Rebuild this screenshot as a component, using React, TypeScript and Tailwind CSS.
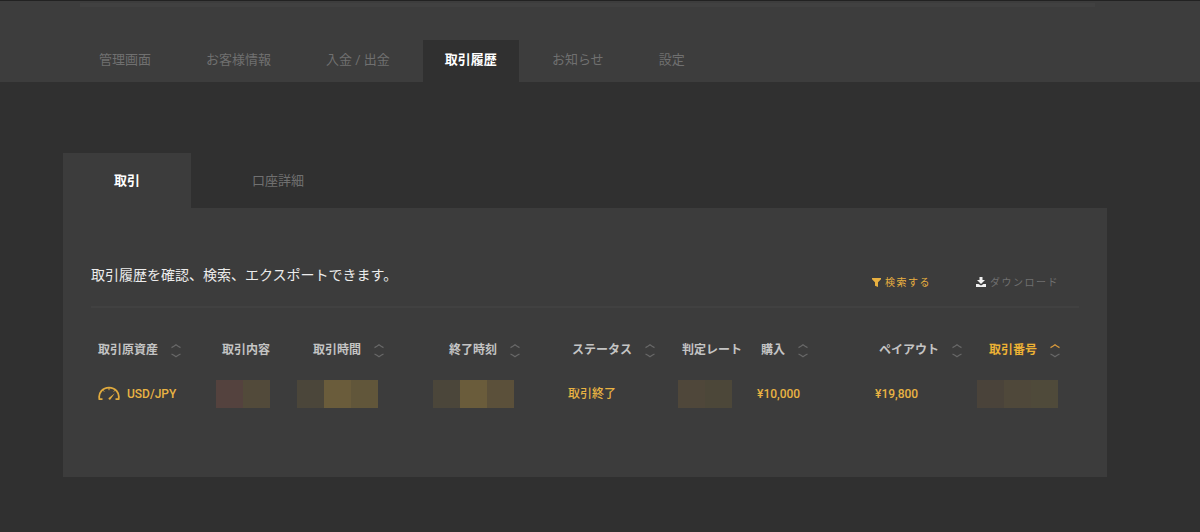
import { useState } from 'react'
import clsx from 'clsx'

const navItems = ['管理画面', 'お客様情報', '入金 / 出金', '取引履歴', 'お知らせ', '設定']

const columns = [
  { label: '取引原資産', sortable: true, width: 'w-[125px]', pad: 'pl-[7px]' },
  { label: '取引内容', sortable: false, width: 'w-[81px]', pad: 'pl-1.5' },
  { label: '取引時間', sortable: true, width: 'w-[136px]', pad: 'pl-4' },
  { label: '終了時刻', sortable: true, width: 'w-[135px]', pad: 'pl-4' },
  { label: 'ステータス', sortable: true, width: 'w-[110px]', pad: 'pl-1' },
  { label: '判定レート', sortable: false, width: 'w-[79px]', pad: 'pl-1' },
  { label: '購入', sortable: true, width: 'w-[118px]', pad: 'pl-1' },
  { label: 'ペイアウト', sortable: true, width: 'w-[102px]', pad: 'pl-1' },
  { label: '取引番号', sortable: true, width: 'w-[102px]', pad: 'pl-3' },
]

function SortIcon({ active }: { active: boolean }) {
  return (
    <svg className="w-3 h-4 shrink-0" viewBox="0 0 12 16" fill="none" strokeWidth="1.2">
      <path d="M1.5 5.6 Q4 4.4 6 2.8 Q8 4.4 10.5 5.6" stroke={active ? '#d99a3c' : '#686868'} />
      <path d="M1.5 12 Q4 13.2 6 14.8 Q8 13.2 10.5 12" stroke="#686868" />
    </svg>
  )
}

function GaugeIcon() {
  return (
    <svg className="w-[22px] h-4 shrink-0" viewBox="0 0 22 16" fill="none" stroke="#e0aa3e" strokeWidth="1.8">
      <path d="M4.5 13.2 H1.4 C0 6.5 5 1.6 11 1.6 C17 1.6 22 6.5 20.6 13.2 H17.5" />
      <path d="M11 2 V4.2 M5 4.2 L6.2 5.6 M17 4.2 L15.8 5.6" strokeWidth="1" />
      <path d="M10.4 12.2 L16.8 7.2 L12.4 13.6 Q11 14.2 10.4 12.2 Z" fill="#e0aa3e" stroke="none" />
    </svg>
  )
}

// Hidden values are drawn as a strip of flat blocks
function Masked({ blocks }: { blocks: string[] }) {
  return (
    <div className="flex">
      {blocks.map((color, i) => (
        <span key={i} className={clsx('w-[27px] h-7', color)} />
      ))}
    </div>
  )
}

export default function App() {
  const [nav, setNav] = useState('取引履歴')
  const [tab, setTab] = useState('取引')
  const [sortBy, setSortBy] = useState('取引番号')

  return (
    <div className="min-h-screen bg-[#303030] text-[#707070] font-['Roboto','Noto_Sans_CJK_JP',sans-serif]">
      {/* Header */}
      <header className="bg-[#3d3d3d] border-t border-[#222222]">
        <div className="ml-20 mr-[105px] mt-0.5 h-1 bg-[#414141]" />
        <nav className="flex gap-[11px] pl-[77px] pt-[33px]">
          {navItems.map((item) => (
            <a
              key={item}
              href="#"
              onClick={() => setNav(item)}
              className={clsx(
                'px-[22px] h-[42px] pb-0.5 flex items-center text-[13px] leading-5',
                nav === item && 'bg-[#303030] text-white font-bold'
              )}
            >
              {item}
            </a>
          ))}
        </nav>
      </header>

      <main className="pl-[63px] pr-[93px] pt-[71px] pb-[55px]">
        {/* Tabs */}
        <div className="flex gap-2.5">
          {['取引', '口座詳細'].map((item) => (
            <button
              key={item}
              type="button"
              onClick={() => setTab(item)}
              className={clsx(
                'px-[51px] h-[55px] text-[13px] leading-5',
                tab === item && 'bg-[#3c3c3c] text-white font-bold'
              )}
            >
              {item}
            </button>
          ))}
        </div>

        <section className="bg-[#3c3c3c] px-7 pt-[57px] pb-[55px]">
          <div className="flex items-end justify-between border-b-2 border-[#414141] pb-[13px]">
            <h1 className="text-sm leading-5 text-[#ececec] pb-2">取引履歴を確認、検索、エクスポートできます。</h1>
            <div className="flex gap-[45px] pr-5 text-[10px] leading-5 tracking-[0.15em]">
              <button type="button" className="flex items-center gap-1 text-[#e8b040]">
                <svg className="w-[9px] h-[11px] pb-0.5" viewBox="0 0 9 9" fill="currentColor">
                  <path d="M0 0 H9 V1.2 L6 4.2 V9 L3 7.8 V4.2 L0 1.2 Z" />
                </svg>
                検索する
              </button>
              <button type="button" className="flex items-center gap-1">
                <svg className="w-2.5 h-3 pb-0.5" viewBox="0 0 10 10" fill="#f0f0f0">
                  <path d="M3.5 0 H6.5 V3 H9 L5 7 L1 3 H3.5 Z M0 7 H2.5 L5 8.6 L7.5 7 H10 V10 H0 Z" />
                </svg>
                ダウンロード
              </button>
            </div>
          </div>

          <table className="w-full table-fixed mt-[26px] text-xs text-left">
            <thead>
              <tr className="h-8">
                {columns.map((col) => (
                  <th
                    key={col.label}
                    className={clsx(
                      'p-0 font-bold whitespace-nowrap',
                      col.width,
                      col.pad,
                      sortBy === col.label ? 'text-[#edb235]' : 'text-[#c4c4c4]'
                    )}
                  >
                    {col.sortable ? (
                      <button type="button" onClick={() => setSortBy(col.label)} className="flex items-center gap-3">
                        {col.label}
                        <SortIcon active={sortBy === col.label} />
                      </button>
                    ) : (
                      col.label
                    )}
                  </th>
                ))}
              </tr>
            </thead>
            <tbody>
              <tr className="h-14 text-[#e9b343] font-medium whitespace-nowrap">
                <td className="pl-[7px]">
                  <div className="flex items-center gap-[7px]">
                    <GaugeIcon />
                    USD/JPY
                  </div>
                </td>
                <td><Masked blocks={['bg-[#54423e]', 'bg-[#524a3a]']} /></td>
                <td><Masked blocks={['bg-[#4b463a]', 'bg-[#6a5c3b]', 'bg-[#61563a]']} /></td>
                <td><Masked blocks={['bg-[#4b463a]', 'bg-[#6a5c3b]', 'bg-[#5b503a]']} /></td>
                <td>取引終了</td>
                <td><Masked blocks={['bg-[#4f473a]', 'bg-[#4c4739]']} /></td>
                <td>¥10,000</td>
                <td>¥19,800</td>
                <td><Masked blocks={['bg-[#4a433a]', 'bg-[#4f483a]', 'bg-[#4f4a3a]']} /></td>
              </tr>
            </tbody>
          </table>
        </section>
      </main>
    </div>
  )
}
